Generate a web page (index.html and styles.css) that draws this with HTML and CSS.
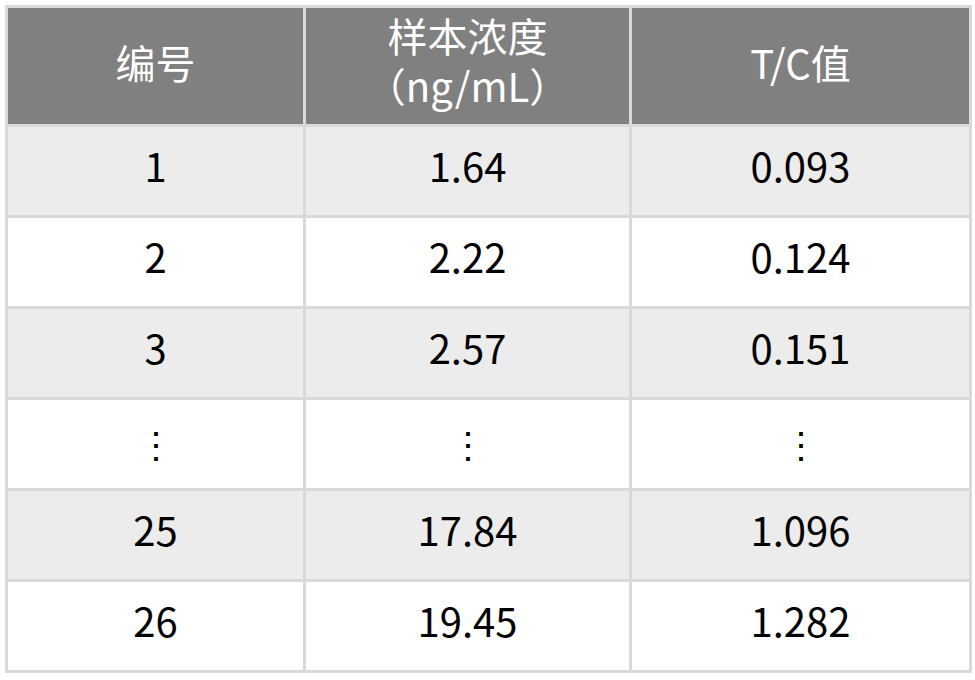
FILE: index.html
```html
<!DOCTYPE html>
<html lang="zh-CN">
<head>
<meta charset="utf-8">
<link rel="stylesheet" href="styles.css">
</head>
<body>
<table class="data">
  <colgroup>
    <col class="c1"><col class="c2"><col class="c3">
  </colgroup>
  <thead>
    <tr class="head">
      <th>编号</th>
      <th class="two">样本浓度<br>（ng/mL）</th>
      <th>T/C值</th>
    </tr>
  </thead>
  <tbody>
    <tr class="alt"><td>1</td><td>1.64</td><td>0.093</td></tr>
    <tr><td>2</td><td>2.22</td><td>0.124</td></tr>
    <tr class="alt"><td>3</td><td>2.57</td><td>0.151</td></tr>
    <tr><td class="dots">⋮</td><td class="dots">⋮</td><td class="dots">⋮</td></tr>
    <tr class="alt"><td>25</td><td>17.84</td><td>1.096</td></tr>
    <tr><td>26</td><td>19.45</td><td>1.282</td></tr>
  </tbody>
</table>
</body>
</html>
```
FILE: styles.css
```css
html, body {
  margin: 0;
  padding: 0;
  background: #ffffff;
}
body {
  padding: 5px 6px 0 5px;
  font-family: "Noto Sans CJK SC", "Noto Sans", sans-serif;
}
.data {
  border-collapse: collapse;
  width: 964px;
  table-layout: fixed;
  border: 3px solid #d9d9d9;
}
.c1 { width: 298px; }
.c2 { width: 326px; }
.c3 { width: 340px; }
.data th, .data td {
  box-sizing: border-box;
  border: 3px solid #d9d9d9;
  text-align: center;
  vertical-align: middle;
  padding: 0;
  font-size: 40px;
}
.data th {
  background: #808080;
  color: #ffffff;
  font-weight: 400;
  height: 119px;
  line-height: 50px;
  padding-bottom: 8px;
}
.data th.two {
  padding-bottom: 13px;
}
.data td {
  height: 91px;
  line-height: 48px;
  padding-bottom: 12px;
  color: #000000;
  background: #ffffff;
}
.data tr.alt td {
  background: #ececec;
}
.data td.dots {
  font-size: 36px;
  padding-bottom: 4px;
}
```
